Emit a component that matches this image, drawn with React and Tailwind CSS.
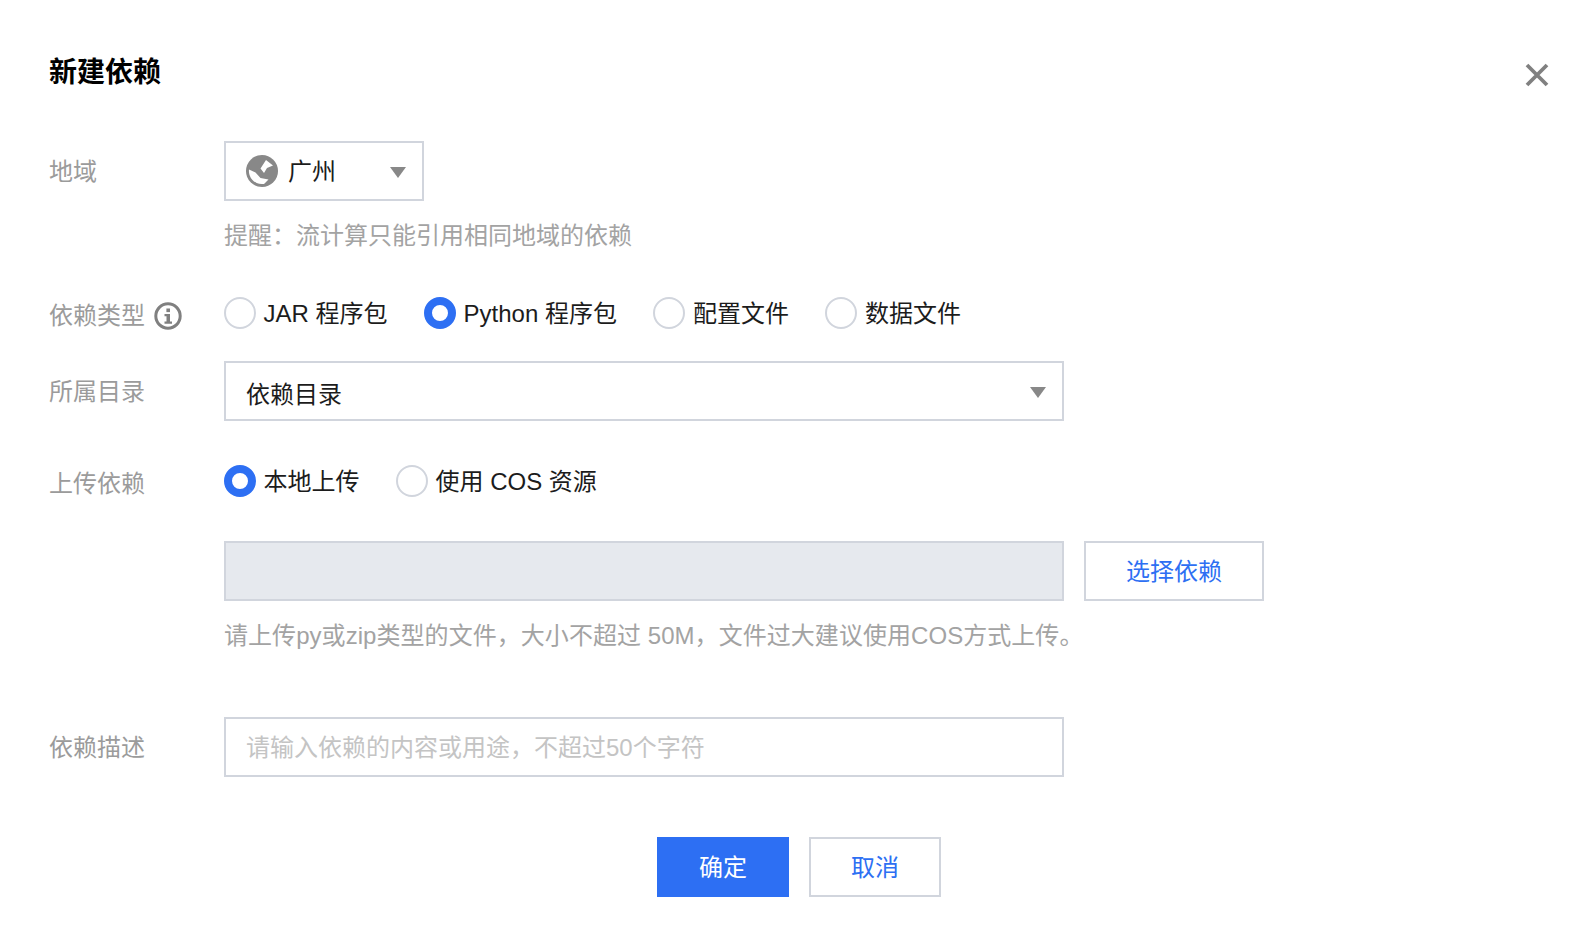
const font = { fontFamily: '"Liberation Sans", "Noto Sans CJK SC", sans-serif' };

function Radio({ label, checked, className = '' }) {
  return (
    <label className={'flex items-center gap-[7.5px] ' + className}>
      {checked ? (
        <span className="w-8 h-8 rounded-full border-[8px] border-[#2d6ff3] bg-white shrink-0" />
      ) : (
        <span className="w-8 h-8 rounded-full border-2 border-[#d1d5dd] bg-white shrink-0" />
      )}
      <span className="text-[24px] leading-8 text-[#1c1c1c] whitespace-nowrap relative top-[1px]">{label}</span>
    </label>
  );
}

function Caret({ className = '' }) {
  return (
    <svg width="16" height="11" viewBox="0 0 16 11" className={'relative top-[1px] ' + className}>
      <path d="M0 0h16L8 11z" fill="#888888" />
    </svg>
  );
}

function Globe() {
  return (
    <svg width="32" height="32" viewBox="0 0 32 32" className="shrink-0">
      <circle cx="16" cy="16" r="16" fill="#888888" />
      <path d="M14.500 13.500L20 5l7 5.500-6 2.500-3 5z" fill="#ffffff" />
      <path d="M3 14.500l6.500 3 5 5.500 8 1.500-4.500 4.500-2 0A13 13 0 0 1 3 14.500z" fill="#ffffff" />
    </svg>
  );
}

function InfoIcon() {
  return (
    <svg width="28" height="28" viewBox="0 0 28 28" className="shrink-0">
      <circle cx="14" cy="14" r="12.200" fill="none" stroke="#808080" strokeWidth="3" />
      <rect x="12.400" y="6.500" width="3.600" height="3.600" fill="#808080" />
      <path d="M10.500 12h5.500v7.500h2v2.200h-7.500v-2.200h2V14.200h-2z" fill="#808080" />
    </svg>
  );
}

function Label({ children, className = '' }) {
  return (
    <div className={'w-[175px] shrink-0 flex items-center gap-[9px] text-[24px] leading-8 text-[#9b9b9b] ' + className}>
      {children}
    </div>
  );
}

export default function App() {
  return (
    <div className="w-[1594px] h-[940px] bg-white pl-[49px] pt-[53px] overflow-hidden" style={font}>
      <div className="flex justify-between pr-[45px]">
        <h1 className="text-[28px] leading-10 font-bold text-black">新建依赖</h1>
        <svg width="24" height="24" viewBox="0 0 24 24" className="mt-[10px]">
          <path d="M2 2l20 20M22 2L2 22" stroke="#808080" strokeWidth="3.800" />
        </svg>
      </div>

      <div className="flex items-center mt-[48px]">
        <Label className="relative top-[1px]">地域</Label>
        <div className="w-[200px] h-[60px] border-2 border-[#d1d5dd] flex items-center pl-[20px] pr-[16px]">
          <Globe />
          <span className="ml-[10px] text-[24px] text-[#1c1c1c] relative top-[1px]">广州</span>
          <Caret className="ml-auto" />
        </div>
      </div>
      <div className="ml-[175px] mt-[17px] text-[24px] leading-9 text-[#a3a3a3]">提醒：流计算只能引用相同地域的依赖</div>

      <div className="flex items-center mt-[43px]">
        <Label className="relative top-[3px]">
          依赖类型
          <InfoIcon />
        </Label>
        <div className="flex gap-[36.500px]">
          <Radio label="JAR 程序包" />
          <Radio label="Python 程序包" checked />
          <Radio label="配置文件" />
          <Radio label="数据文件" />
        </div>
      </div>

      <div className="flex items-center mt-[32px]">
        <Label className="relative top-[1px]">所属目录</Label>
        <div className="w-[840px] h-[60px] border-2 border-[#d1d5dd] flex items-center pl-[20px] pr-[16px]">
          <span className="text-[24px] leading-9 text-[#1c1c1c] relative top-[4px]">依赖目录</span>
          <Caret className="ml-auto" />
        </div>
      </div>

      <div className="flex items-center mt-[44px]">
        <Label className="relative top-[3px]">上传依赖</Label>
        <div className="flex gap-[36.500px]">
          <Radio label="本地上传" checked />
          <Radio label="使用 COS 资源" />
        </div>
      </div>

      <div className="flex ml-[175px] mt-[44px] gap-[20px]">
        <div className="w-[840px] h-[60px] border-2 border-[#d1d5dd] bg-[#e6e9ee]" />
        <button className="w-[180px] h-[60px] border-2 border-[#d1d5dd] bg-white text-[24px] text-[#2d6ff3] pt-[2px]">选择依赖</button>
      </div>
      <div className="ml-[175px] mt-[17px] text-[24px] leading-9 text-[#a3a3a3] whitespace-nowrap tracking-[0.05px]">
        请上传py或zip类型的文件，大小不超过 50M，文件过大建议使用COS方式上传。
      </div>

      <div className="flex items-center mt-[63px]">
        <Label className="relative top-[1px]">依赖描述</Label>
        <div className="w-[840px] h-[60px] border-2 border-[#d1d5dd] flex items-center pl-[20px] pt-[2px] text-[24px] text-[#c4c4c4]">
          请输入依赖的内容或用途，不超过50个字符
        </div>
      </div>

      <div className="flex mt-[60px] ml-[608px] gap-[20px]">
        <button className="w-[132px] h-[60px] bg-[#2d6ff3] text-white text-[24px] pt-[2px]">确定</button>
        <button className="w-[132px] h-[60px] border-2 border-[#d1d5dd] bg-white text-[#2d6ff3] text-[24px] pt-[2px]">取消</button>
      </div>
    </div>
  );
}
